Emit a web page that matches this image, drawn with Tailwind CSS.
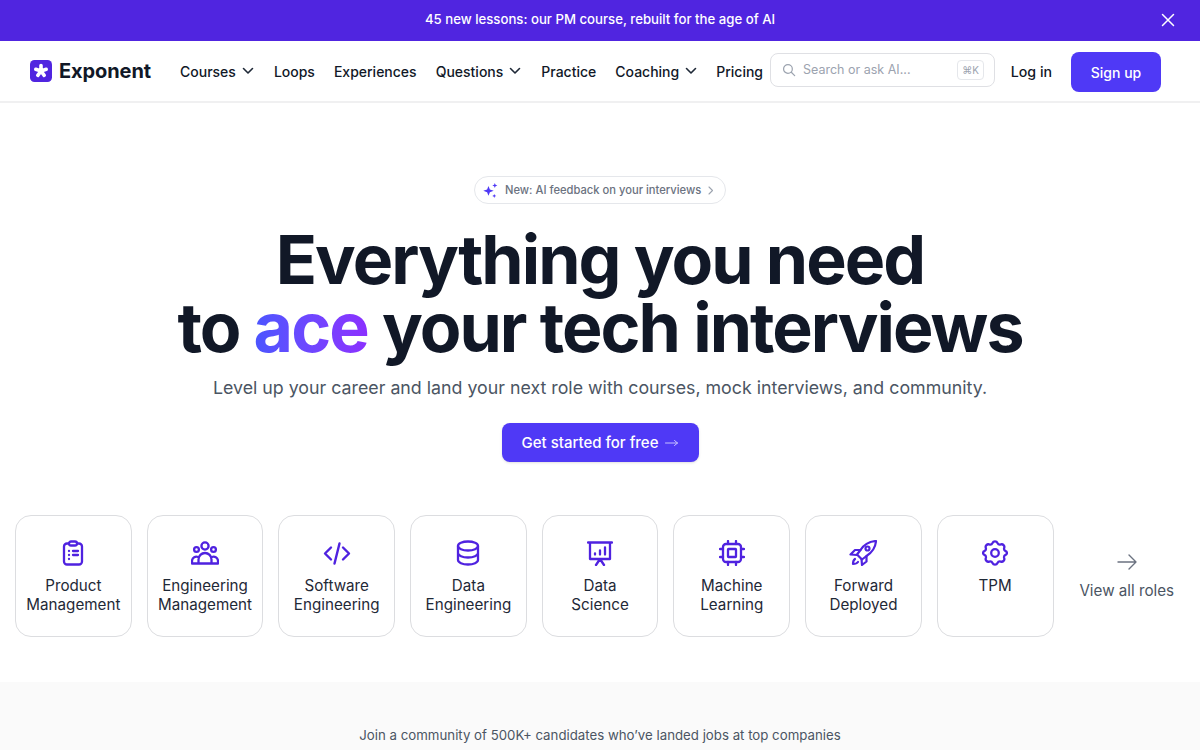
<!DOCTYPE html>
<html lang="en">

<head>
    <meta charset="UTF-8">
    <meta name="viewport" content="width=device-width, initial-scale=1.0">
    <title>Exponent</title>
    <script src="https://cdn.jsdelivr.net/npm/@tailwindcss/browser@4"></script>
</head>

<body class="bg-white font-['Inter',sans-serif] text-[#111827] h-[750px] overflow-hidden">
    <!-- banner -->
    <div class="relative h-[41px] bg-[#5025e0] flex items-center justify-center text-white text-[13.2px] font-medium">
        <span class="mt-[-2px]">45 new lessons: our PM course, rebuilt for the age of AI</span>
        <svg class="absolute right-[25px] top-[13px] w-[14px] h-[14px]" viewBox="0 0 14 14" fill="none" stroke="white" stroke-width="1.5" stroke-linecap="round">
            <path d="M1.5 1.5l11 11M12.5 1.5l-11 11" />
        </svg>
    </div>

    <!-- nav -->
    <nav class="h-[62px] pt-[2px] border-b-2 border-[#f0f0f1] flex items-center pl-[30px] pr-[39px]">
        <a class="flex items-center gap-[7px] w-[150px] shrink-0 mt-[-2px]">
            <svg class="w-[22px] h-[22px]" viewBox="0 0 22 22">
                <rect width="22" height="22" rx="4.5" fill="#5025e0" />
                <path d="M11 5.500v5.500M11 11l5.200-1.700M11 11l-5.200-1.700M11 11l3.200 4.400M11 11l-3.200 4.400" stroke="white" stroke-width="3.600" stroke-linecap="round" />
            </svg>
            <span class="text-[20px] font-bold tracking-[-0.1px] text-[#111827]">Exponent</span>
        </a>
        <div class="flex items-center gap-[19px] text-[14px] font-medium mt-[-2px]">
            <span class="flex items-center gap-[6px] mr-[1px]">Courses
                <svg class="w-[12px] h-[8px]" viewBox="0 0 12 8" fill="none" stroke="#1f2937" stroke-width="1.6" stroke-linecap="round" stroke-linejoin="round"><path d="M1.500 1.500L6 6l4.500-4.500" /></svg>
            </span>
            <span>Loops</span>
            <span>Experiences</span>
            <span class="flex items-center gap-[6px] mr-[1px]">Questions
                <svg class="w-[12px] h-[8px]" viewBox="0 0 12 8" fill="none" stroke="#1f2937" stroke-width="1.6" stroke-linecap="round" stroke-linejoin="round"><path d="M1.500 1.500L6 6l4.500-4.500" /></svg>
            </span>
            <span>Practice</span>
            <span class="flex items-center gap-[6px]">Coaching
                <svg class="w-[12px] h-[8px]" viewBox="0 0 12 8" fill="none" stroke="#1f2937" stroke-width="1.6" stroke-linecap="round" stroke-linejoin="round"><path d="M1.500 1.500L6 6l4.500-4.500" /></svg>
            </span>
            <span>Pricing</span>
        </div>
        <div class="ml-[7px] w-[225px] h-[34px] mt-[-4px] rounded-lg border border-[#dfe0e4] flex items-center pl-[11px] pr-[10px] shrink-0">
            <svg class="w-[14px] h-[14px] text-[#9ca3af]" viewBox="0 0 16 16" fill="none" stroke="currentColor" stroke-width="1.4" stroke-linecap="round"><circle cx="6.800" cy="6.800" r="5" /><path d="M10.600 10.600L14.500 14.500" /></svg>
            <span class="ml-[7px] text-[12.5px] text-[#9ca3af]">Search or ask AI...</span>
            <span class="ml-auto w-[27px] h-[20px] rounded border border-[#e5e7eb] text-[10px] text-[#9ca3af] flex items-center justify-center">⌘K</span>
        </div>
        <span class="ml-auto text-[14.2px] font-medium">Log in</span>
        <span class="ml-[19px] w-[90px] h-[40px] rounded-lg bg-[#4f39f6] text-white text-[14px] font-medium flex items-center justify-center">Sign up</span>
    </nav>

    <!-- hero -->
    <section class="flex flex-col items-center pt-[73px]">
        <div class="w-[252px] h-[28px] rounded-full border border-[#e5e7eb] flex items-center pl-[8px] text-[11.2px] font-medium text-[#6b7280]">
            <svg class="w-[15px] h-[15px] mr-[7px]" viewBox="1 0.500 12.500 13" fill="#4f39f6">
                <path d="M5.500 3l1.200 3.100L10 7.300 6.700 8.500 5.500 11.600 4.300 8.500 1 7.300l3.300-1.200z" />
                <path d="M11 0.500l.6 1.600 1.600.6-1.600.6-.6 1.600-.6-1.600-1.600-.6 1.600-.6z" />
                <path d="M10.500 10l.5 1.200 1.200.5-1.200.5-.5 1.300-.5-1.300-1.200-.5 1.200-.5z" />
            </svg>
            New: AI feedback on your interviews
            <svg class="w-[6px] h-[9px] ml-[7px]" viewBox="0 0 6 9" fill="none" stroke="#9ca3af" stroke-width="1.100" stroke-linecap="round" stroke-linejoin="round"><path d="M1 1l3.500 3.500L1 8" /></svg>
        </div>
        <h1 class="mt-[21px] text-center text-[68px] leading-[68px] font-bold tracking-[-1.95px] text-[#111827]">
            Everything you need<br>to <span class="bg-gradient-to-r from-[#4a55ff] to-[#8b30ff] bg-clip-text text-transparent">ace</span> your tech interviews
        </h1>
        <p class="mt-[13px] text-[17.8px] leading-[28px] text-[#4b5563]">Level up your career and land your next role with courses, mock interviews, and community.</p>
        <a class="mt-[21px] w-[197px] h-[39px] rounded-lg bg-[#4f39f6] text-white text-[15px] font-medium flex items-center justify-center shadow-sm pt-[1px]">Get started for free
            <svg class="ml-[7px] w-[13px] h-[8px]" viewBox="0 0 13 8" fill="none" stroke="#c7c2ff" stroke-width="1" stroke-linecap="round" stroke-linejoin="round"><path d="M0.500 4h12M9.500 1.500l3 2.500-3 2.500" /></svg>
        </a>
    </section>

    <!-- roles -->
    <section class="mt-[53px] pl-[15px] flex items-stretch">
        <div class="flex gap-[15px]">
            <a class="w-[116.7px] h-[122px] rounded-2xl border border-[#dcdde0] flex flex-col items-center pt-[24px] text-center text-[15.2px] leading-[19px] text-[#1f2937]">
                <svg class="w-[24px] h-[26px] mb-[10px]" viewBox="0 0 24 26" fill="none" stroke="#4f22e0" stroke-width="2.300" stroke-linecap="round" stroke-linejoin="round">
                    <rect x="3" y="3.500" width="18" height="21" rx="3" />
                    <rect x="8" y="1.500" width="8" height="4" rx="2" fill="white" />
                    <path d="M8 11h.01M12 11h5M8 15h.01M12 15h5M8 19h.01" />
                </svg>
                Product<br>Management
            </a>
            <a class="w-[116.7px] h-[122px] rounded-2xl border border-[#dcdde0] flex flex-col items-center pt-[24px] text-center text-[15.2px] leading-[19px] text-[#1f2937]">
                <svg class="w-[28px] h-[26px] mb-[10px]" viewBox="0 0 28 26" fill="none" stroke="#4f22e0" stroke-width="2.300" stroke-linecap="round" stroke-linejoin="round">
                    <circle cx="14" cy="6" r="3.600" />
                    <circle cx="5.500" cy="9.500" r="2.400" />
                    <circle cx="22.500" cy="9.500" r="2.400" />
                    <path d="M1 23.500v-3a4.500 4.500 0 0 1 6-3.500M27 23.500v-3a4.500 4.500 0 0 0-6-3.500M7.500 23.500v-4a6.500 6.500 0 0 1 13 0v4M1 23.500h26" />
                </svg>
                Engineering<br>Management
            </a>
            <a class="w-[116.7px] h-[122px] rounded-2xl border border-[#dcdde0] flex flex-col items-center pt-[24px] text-center text-[15.2px] leading-[19px] text-[#1f2937]">
                <svg class="w-[28px] h-[26px] mb-[10px]" viewBox="0 0 28 26" fill="none" stroke="#4f22e0" stroke-width="2.400" stroke-linecap="round" stroke-linejoin="round">
                    <path d="M8 7.500L2 13.500l6 6M20 7.500l6 6-6 6M16.500 3.500l-5 20" />
                </svg>
                Software<br>Engineering
            </a>
            <a class="w-[116.7px] h-[122px] rounded-2xl border border-[#dcdde0] flex flex-col items-center pt-[24px] text-center text-[15.2px] leading-[19px] text-[#1f2937]">
                <svg class="w-[24px] h-[26px] mb-[10px]" viewBox="0 0 24 26" fill="none" stroke="#4f22e0" stroke-width="2.300" stroke-linecap="round" stroke-linejoin="round">
                    <ellipse cx="12" cy="6" rx="10" ry="4.500" />
                    <path d="M2 6v14c0 2.500 4.500 4.500 10 4.500S22 22.500 22 20V6M2 13c0 2.500 4.500 4.500 10 4.500S22 15.500 22 13" />
                </svg>
                Data<br>Engineering
            </a>
            <a class="w-[116.7px] h-[122px] rounded-2xl border border-[#dcdde0] flex flex-col items-center pt-[24px] text-center text-[15.2px] leading-[19px] text-[#1f2937]">
                <svg class="w-[26px] h-[26px] mb-[10px]" viewBox="0 0 26 26" fill="none" stroke="#4f22e0" stroke-width="2.300" stroke-linecap="round" stroke-linejoin="round">
                    <path d="M1 2.500h24M3 2.500v16.500h20V2.500M9 25l4-6 4 6" />
                    <path d="M8 14.500v-1M13 14.500v-4M18 14.500v-7" />
                </svg>
                Data<br>Science
            </a>
            <a class="w-[116.7px] h-[122px] rounded-2xl border border-[#dcdde0] flex flex-col items-center pt-[24px] text-center text-[15.2px] leading-[19px] text-[#1f2937]">
                <svg class="w-[26px] h-[26px] mb-[10px]" viewBox="0 0 26 26" fill="none" stroke="#4f22e0" stroke-width="2.300" stroke-linecap="round" stroke-linejoin="round">
                    <rect x="4" y="4" width="18" height="18" rx="3" />
                    <rect x="9" y="9" width="8" height="8" rx="0.500" />
                    <path d="M9 1v3M17 1v3M9 22v3M17 22v3M1 9h3M1 17h3M22 9h3M22 17h3" />
                </svg>
                Machine<br>Learning
            </a>
            <a class="w-[116.7px] h-[122px] rounded-2xl border border-[#dcdde0] flex flex-col items-center pt-[24px] text-center text-[15.2px] leading-[19px] text-[#1f2937]">
                <svg class="w-[28px] h-[26px] mb-[10px]" viewBox="0 0 28 26" fill="none" stroke="#4f22e0" stroke-width="2.200" stroke-linecap="round" stroke-linejoin="round">
                    <path d="M27 1c-7 .5-12 3.500-15.500 9L8 14.500l5 5 4.500-3.500C23 12.500 26.500 8 27 1z" />
                    <path d="M11.500 10H6L1.500 14.500 8 15M17.500 16v5.500L13 25l-.5-6" />
                    <circle cx="18.500" cy="8.500" r="2" />
                    <path d="M6 19c-1.500 1-2 3-2 5 2 0 4-.5 5-2" />
                </svg>
                Forward<br>Deployed
            </a>
            <a class="w-[116.7px] h-[122px] rounded-2xl border border-[#dcdde0] flex flex-col items-center pt-[24px] text-center text-[15.2px] leading-[19px] text-[#1f2937]">
                <svg class="w-[26px] h-[26px] mb-[10px]" viewBox="0 0 24 24" fill="none" stroke="#4f22e0" stroke-width="2.100" stroke-linecap="round" stroke-linejoin="round">
                    <path d="M9.700 2.800a2.500 2.500 0 0 1 4.600 0 2.500 2.500 0 0 0 3 1.300 2.500 2.500 0 0 1 3.200 3.200 2.500 2.500 0 0 0 1.300 3 1.800 1.800 0 0 1 0 3.400 2.500 2.500 0 0 0-1.300 3 2.500 2.500 0 0 1-3.200 3.200 2.500 2.500 0 0 0-3 1.300 2.500 2.500 0 0 1-4.600 0 2.500 2.500 0 0 0-3-1.300 2.500 2.500 0 0 1-3.200-3.200 2.500 2.500 0 0 0-1.300-3 1.800 1.800 0 0 1 0-3.400 2.500 2.500 0 0 0 1.300-3 2.500 2.500 0 0 1 3.200-3.200 2.500 2.500 0 0 0 3-1.300z" />
                    <circle cx="12" cy="12" r="3.500" />
                </svg>
                TPM
            </a>
        </div>
        <a class="flex-1 flex flex-col items-center justify-center text-[15.2px] text-[#4b5563] gap-[10px] mt-[5px]">
            <svg class="w-[20px] h-[16px]" viewBox="0 0 20 16" fill="none" stroke="#6b7280" stroke-width="1.400" stroke-linecap="round" stroke-linejoin="round"><path d="M1 8h18M12 1l7 7-7 7" /></svg>
            View all roles
        </a>
    </section>

    <!-- social proof -->
    <section class="mt-[45px] h-[68px] bg-[#fafafa] pt-[43px] text-center text-[13.25px] leading-[20px] text-[#4b5563]">
        Join a community of 500K+ candidates who’ve landed jobs at top companies
    </section>
</body>

</html>
